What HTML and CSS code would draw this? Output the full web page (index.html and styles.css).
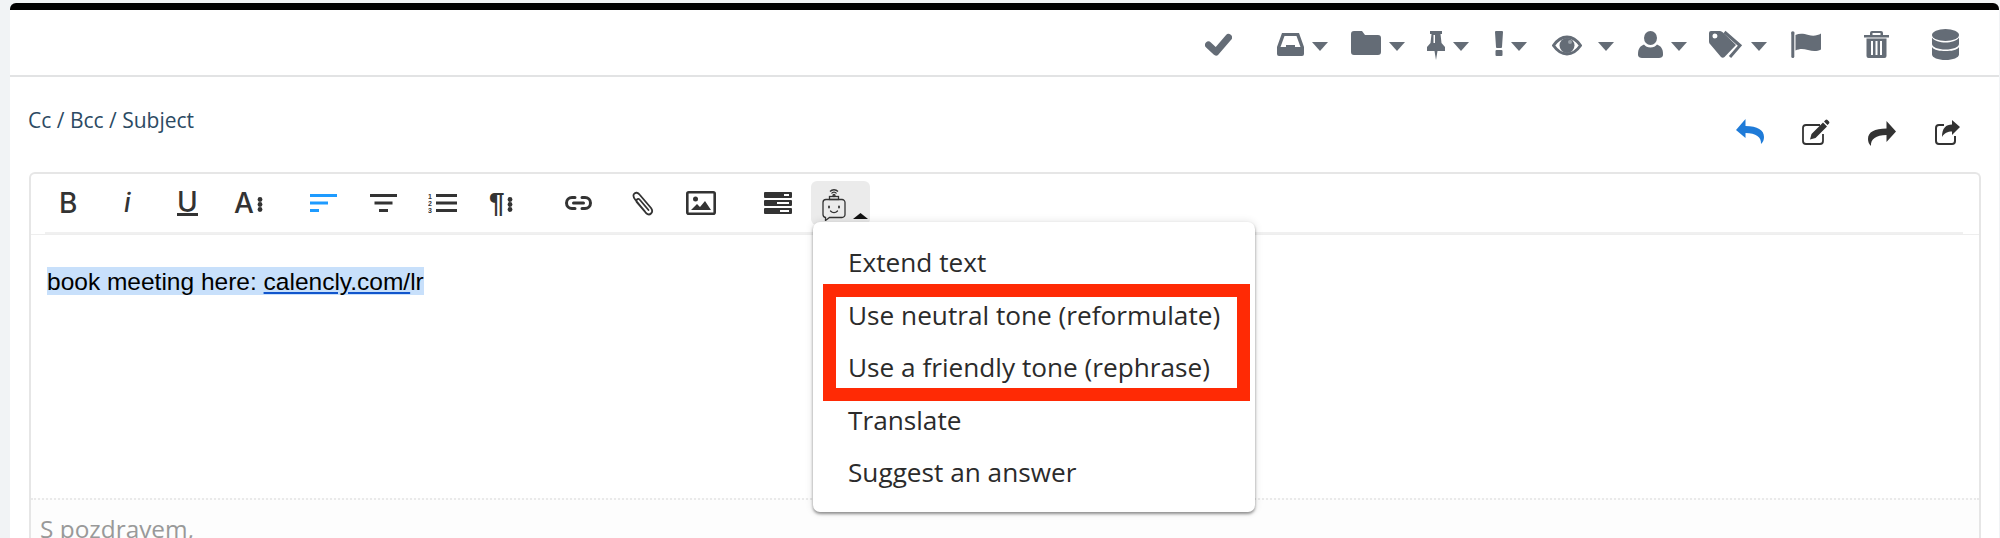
FILE: index.html
```html
<!DOCTYPE html>
<html lang="en">
<head>
    <meta charset="UTF-8">
    <meta name="viewport" content="width=device-width, initial-scale=1.0">
    <title>Compose reply</title>
    <link rel="stylesheet" href="styles.css">
</head>
<body>
    <svg class="sprites">
        <symbol id="caret" viewBox="0 0 16 32"><path d="M0 13h16l-8 9z"/></symbol>
        <symbol id="dots" viewBox="0 0 6 15"><circle cx="3" cy="2.500" r="2.400"/><circle cx="3" cy="7.500" r="2.400"/><circle cx="3" cy="12.500" r="2.400"/></symbol>
    </svg>

    <div class="card">
        <!-- Ticket actions -->
        <div class="actions">
            <div class="action">
                <svg class="icon" width="27" height="32" viewBox="0 0 27 32"><path d="M3.500 16l7.500 7L23.500 8.500" fill="none" stroke="currentColor" stroke-width="7" stroke-linecap="round" stroke-linejoin="round"/></svg>
            </div>
            <div class="action">
                <svg class="icon" width="27" height="32" viewBox="0 0 27 32"><path fill-rule="evenodd" d="M5 4h17l5 14v7a2 2 0 0 1-2 2H2a2 2 0 0 1-2-2v-7zM7.500 7L3.500 18H9v-2h9v2h5.500L19.500 7z"/></svg>
                <svg class="caret"><use href="#caret"/></svg>
            </div>
            <div class="action">
                <svg class="icon" width="30" height="32" viewBox="0 0 30 32"><path d="M3 2h8l3 4h13a3 3 0 0 1 3 3v14a3 3 0 0 1-3 3H3a3 3 0 0 1-3-3V5a3 3 0 0 1 3-3z"/></svg>
                <svg class="caret"><use href="#caret"/></svg>
            </div>
            <div class="action">
                <svg class="icon" width="18" height="32" viewBox="0 0 18 32"><path fill-rule="evenodd" d="M3 2h12v3h-1.500l1 9 3.500 4v4h-7.500L9 31l-1.500-9H0v-4l3.500-4 1-9H3zM6.500 6v8h1.500V6z"/></svg>
                <svg class="caret"><use href="#caret"/></svg>
            </div>
            <div class="action">
                <svg class="icon" width="8" height="32" viewBox="0 0 8 32"><path d="M1 2h6a1 1 0 0 1 1 1l-1 15a1 1 0 0 1-1 1H2a1 1 0 0 1-1-1L0 3a1 1 0 0 1 1-1z"/><rect x="0.500" y="21" width="7" height="6" rx="1"/></svg>
                <svg class="caret"><use href="#caret"/></svg>
            </div>
            <div class="action action-wide">
                <svg class="icon" width="30" height="32" viewBox="0 0 30 32"><path d="M1.500 16.500C6 10 10 8 15 8s9 2 13.500 8.500C24 23 20 25 15 25S6 23 1.500 16.500z" fill="none" stroke="currentColor" stroke-width="3"/><circle cx="15" cy="16.500" r="7.500"/><circle cx="18" cy="13" r="2" fill="#9aa1a8"/></svg>
                <svg class="caret"><use href="#caret"/></svg>
            </div>
            <div class="action">
                <svg class="icon" width="25" height="32" viewBox="0 0 25 32"><ellipse cx="12.500" cy="9" rx="6.500" ry="7"/><path d="M0 25c0-5 2-8 6-9.500 1.500 2 3.500 3 6.500 3s5-1 6.500-3c4 1.500 6 4.500 6 9.500v1c0 2-2 3-4 3H4c-2 0-4-1-4-3z"/></svg>
                <svg class="caret"><use href="#caret"/></svg>
            </div>
            <div class="action">
                <svg class="icon" width="34" height="32" viewBox="0 0 34 32"><path fill-rule="evenodd" d="M2 2h9c1 0 2 .5 3 1.500L27 16 15.500 28c-1 1-2.500 1-3.500 0L1 15c-.7-.8-1-1.500-1-3V4a2 2 0 0 1 2-2zM6 4.500a2.500 2.500 0 1 0 0 5 2.500 2.500 0 0 0 0-5z"/><path d="M15.500 3l15.500 13.500L21 28" fill="none" stroke="currentColor" stroke-width="3"/></svg>
                <svg class="caret"><use href="#caret"/></svg>
            </div>
            <div class="action">
                <svg class="icon" width="30" height="32" viewBox="0 0 30 32"><circle cx="1.800" cy="4" r="1.800"/><rect x="0.300" y="4" width="3" height="25" rx="1.500"/><path d="M4.500 6c4-2 8-1.500 13 0s9 .5 12.500-1.500v16c-4 2-8 2-13 .5s-8.500-1.500-12.500.5z"/></svg>
            </div>
            <div class="action">
                <svg class="icon" width="25" height="32" viewBox="0 0 25 32"><path fill-rule="evenodd" d="M6 6V4a2 2 0 0 1 2-2h9a2 2 0 0 1 2 2v2h6v2.500H0V6zM8.500 4v2h8V4z"/><path fill-rule="evenodd" d="M2.500 9.500h20V27a2 2 0 0 1-2 2h-16a2 2 0 0 1-2-2zM7 12v14h2V12zM11.500 12v14h2V12zM16 12v14h2V12z"/></svg>
            </div>
            <div class="action">
                <svg class="icon" width="27" height="32" viewBox="0 0 27 32"><ellipse cx="13.500" cy="6" rx="13.500" ry="6"/><path d="M0 8.500c2 3.500 8 5 13.500 5S25 12 27 8.500V15c0 3-6 5.500-13.500 5.500S0 18 0 15z"/><path d="M0 18c2 3.500 8 4 13.500 4S25 21.500 27 18v7.500c0 3-6 5.500-13.500 5.500S0 28.500 0 25.500z"/></svg>
            </div>
        </div>

        <div class="reply-head">
            <a class="fields-link">Cc / Bcc / Subject</a>
            <div class="reply-modes">
                <svg class="mode-active" width="28" height="28" viewBox="0 0 28 28"><path d="M0 11L9.500 0v7c12 0 18.500 4 18.500 11 0 3-1 5-3 7 .5-7-5-11-15.500-11v5z"/></svg>
                <svg width="28" height="28" viewBox="0 0 28 28"><path d="M18 6H4a3 3 0 0 0-3 3v13a3 3 0 0 0 3 3h14a3 3 0 0 0 3-3v-7" fill="none" stroke="currentColor" stroke-width="1.800"/><path d="M8 20.500l1.500-5.500L21 3.500l4 4L13.500 19zM22 2.500l1.500-1.500a1.500 1.500 0 0 1 2 0l1.500 1.500a1.500 1.500 0 0 1 0 2L25.500 6z"/></svg>
                <svg width="28" height="28" viewBox="0 0 28 28"><path d="M28 12.500L18.500 2v7.500C6.500 9.500 0 13 0 20c0 3 1 5 3 7-.5-7 5-11 15.500-11v7z"/></svg>
                <svg width="28" height="28" viewBox="0 0 28 28"><path d="M10 6H5a3 3 0 0 0-3 3v13a3 3 0 0 0 3 3h13a3 3 0 0 0 3-3v-5" fill="none" stroke="currentColor" stroke-width="2"/><path d="M26 8l-8-7v4.500C12 5.500 8 9 8 18c2.500-4 5.500-5.500 10-5.500V16z"/></svg>
            </div>
        </div>

        <div class="editor">
            <div class="toolbar">
                <span class="tool-text tool-bold">B</span>
                <span class="tool-text tool-italic">i</span>
                <span class="tool-text tool-under">U</span>
                <span class="tool-text tool-more">A<svg class="dots"><use href="#dots"/></svg></span>
                <svg class="tool-blue" width="27" height="20" viewBox="0 0 27 20"><rect y="1" width="27" height="3"/><rect y="8.500" width="18" height="3"/><rect y="16" width="9" height="3"/></svg>
                <svg width="27" height="20" viewBox="0 0 27 20"><rect y="1" width="27" height="3"/><rect x="4.500" y="8.500" width="18" height="3"/><rect x="9" y="16" width="9" height="3"/></svg>
                <svg width="29" height="22" viewBox="0 0 29 22"><text class="list-num" x="0" y="7">1</text><text class="list-num" x="0" y="14">2</text><text class="list-num" x="0" y="21">3</text><rect x="8" y="2" width="21" height="3"/><rect x="8" y="9.500" width="21" height="3"/><rect x="8" y="17" width="21" height="3"/></svg>
                <span class="tool-text tool-more tool-para">¶<svg class="dots"><use href="#dots"/></svg></span>
                <svg width="29" height="16" viewBox="0 0 29 16"><path d="M11 2.500H8a5.500 5.500 0 0 0 0 11h3M18 2.500h3a5.500 5.500 0 0 1 0 11h-3M9.500 8h10" fill="none" stroke="currentColor" stroke-width="3" stroke-linecap="round"/></svg>
                <svg width="23" height="25" viewBox="0 0 23 25"><path d="M14 20.500L4.500 9C2.500 6.500 1.500 5 3 3s4-1.500 5.500.5L20 17c1.500 2 1.500 4 0 5.500s-3.500 1-5-.5L6 11.500c-1-1.200-.8-2.200 0-3s2-.8 3 .5l8.500 10" fill="none" stroke="currentColor" stroke-width="1.800" stroke-linecap="round"/></svg>
                <svg width="30" height="24" viewBox="0 0 30 24"><rect x="1.300" y="1.300" width="27.400" height="21.400" rx="1.500" fill="none" stroke="currentColor" stroke-width="2.600"/><circle cx="9.500" cy="8" r="2.500"/><path d="M5 19l6-6 3 3 5-6 6 9z"/></svg>
                <svg width="28" height="24" viewBox="0 0 28 24"><path fill-rule="evenodd" d="M1 1h26a1 1 0 0 1 1 1v4a1 1 0 0 1-1 1H1a1 1 0 0 1-1-1V2a1 1 0 0 1 1-1zM20 3v2h5V3zM1 9h26a1 1 0 0 1 1 1v4a1 1 0 0 1-1 1H1a1 1 0 0 1-1-1v-4a1 1 0 0 1 1-1zM13 11v2h12v-2zM1 17h26a1 1 0 0 1 1 1v4a1 1 0 0 1-1 1H1a1 1 0 0 1-1-1v-4a1 1 0 0 1 1-1zM16 19v2h9v-2z"/></svg>

                <div class="ai-button">
                    <svg width="28" height="34" viewBox="0 0 28 34" fill="none" stroke="currentColor" stroke-width="1.300"><path d="M10 4.500a5.500 5.500 0 0 1 8 0M11.500 6.500a3 3 0 0 1 5 0"/><circle cx="14" cy="8.500" r="1"/><rect x="9.500" y="9.500" width="9" height="3"/><path d="M6 12.500h16a3 3 0 0 1 3 3v12a3 3 0 0 1-3 3H9.500L5.500 33.500v-3A3 3 0 0 1 3 27.500v-12a3 3 0 0 1 3-3z"/><path d="M9 19.500v1M19 19.500v1" stroke-linecap="round" stroke-width="1.800"/><path d="M10.500 24c2 2 5 2 7 0" stroke-linecap="round"/></svg>
                    <svg class="ai-caret" width="15" height="6" viewBox="0 0 15 6"><path d="M0 6L7.500 0 15 6z"/></svg>

                    <div class="ai-menu">
                        <div class="ai-item">Extend text</div>
                        <div class="ai-item">Use neutral tone (reformulate)</div>
                        <div class="ai-item">Use a friendly tone (rephrase)</div>
                        <div class="ai-item">Translate</div>
                        <div class="ai-item">Suggest an answer</div>
                        <div class="callout"></div>
                    </div>
                </div>
            </div>

            <div class="editor-body">
                <span class="selected">book meeting here: <span class="link">calencly.com/</span>lr</span>
            </div>
            <div class="signature">S pozdravem,</div>
        </div>
    </div>
</body>
</html>
```

FILE: styles.css
```css
/* Base styles */
:root {
    --icon: #646c76;
    --dark: #333;
    --line: #e6e6e6;
    --blue: #1e9bff;
    --red: #ff2a05;
}

html {
    overflow: hidden;
}

body {
    font-family: "Open Sans", sans-serif;
    margin: 0;
    height: 535px;
    padding: 3px 1px 0 10px;
    background: #f1f3f5;
    overflow: hidden;
}

.sprites {
    display: none;
}

.card {
    height: 100%;
    box-sizing: border-box;
    background: white;
    border-top: 7px solid black;
    border-radius: 6px 6px 0 0;
}

/* Ticket actions */
.actions {
    display: grid;
    grid-template-columns: 72px 74px 76px 68px 57px 86px 71px 82px 73px 68px 67px;
    box-sizing: border-box;
    height: 67px;
    padding: 19px 0 0 1195px;
    border-bottom: 2px solid #e2e3e4;
    color: var(--icon);
}

.action {
    display: flex;
    gap: 8px;
    align-items: flex-start;
}

.action-wide {
    gap: 16px;
}

.action svg,
.toolbar svg,
.reply-modes svg {
    display: block;
    fill: currentColor;
}

.action .caret {
    width: 16px;
    height: 32px;
}

/* Reply header */
.reply-head {
    display: flex;
    justify-content: space-between;
    align-items: flex-start;
    box-sizing: border-box;
    height: 95px;
    padding: 31px 37px 0 18px;
}

.fields-link {
    font-size: 21px;
    line-height: 24px;
    color: #2c4a63;
}

.reply-modes {
    display: flex;
    gap: 38px;
    margin-top: 11px;
    color: var(--dark);
}

.reply-modes .mode-active {
    color: #1f7bd8;
}

/* Editor */
.editor {
    box-sizing: border-box;
    margin: 0 18px 0 19px;
    height: 366px;
    border: 2px solid var(--line);
    border-bottom: none;
    border-radius: 6px 6px 0 0;
}

.toolbar {
    display: grid;
    grid-template-columns: 65px 53px 57px 76px 60px 58px 61px 75px 67px 55px 78px 47px auto;
    justify-items: start;
    align-items: center;
    box-sizing: border-box;
    height: 60px;
    margin: 0 16px 0 14px;
    padding-left: 14px;
    border-bottom: 2px solid #f0f0f0;
    color: var(--dark);
}

.tool-text {
    font-family: Inter, "Liberation Sans", sans-serif;
    font-size: 28px;
    line-height: 28px;
    font-weight: 500;
}

.tool-italic {
    font-style: italic;
    font-size: 26px;
}

.tool-under {
    line-height: 22px;
    border-bottom: 3px solid var(--dark);
}

.tool-more {
    display: flex;
    align-items: flex-end;
    gap: 3px;
}

.tool-para {
    font-family: "Liberation Sans", sans-serif;
    font-weight: 700;
    font-size: 28px;
    letter-spacing: -1px;
}

.dots {
    width: 6px;
    height: 15px;
    margin-bottom: 5px;
}

.tool-blue {
    color: var(--blue);
}

.list-num {
    font-family: "Liberation Sans", sans-serif;
    font-size: 7px;
    font-weight: 700;
}

/* AI dropdown */
.ai-button {
    position: relative;
    display: flex;
    align-items: flex-end;
    gap: 5px;
    box-sizing: border-box;
    width: 59px;
    height: 44px;
    padding: 0 0 4px 9px;
    background: #ebebeb;
    border-radius: 6px;
}

.toolbar .ai-button svg {
    flex: none;
}

.ai-button svg:first-child {
    fill: none;
}

.ai-caret {
    margin-bottom: 2px;
    color: #111;
}

.ai-menu {
    position: absolute;
    top: 41px;
    left: 2px;
    z-index: 2;
    box-sizing: border-box;
    width: 442px;
    height: 290px;
    padding: 14px 0;
    background: white;
    border-radius: 7px;
    box-shadow: 0 2px 3px rgba(0, 0, 0, 0.4), 0 0 8px rgba(0, 0, 0, 0.12);
}

.ai-item {
    padding-left: 35px;
    font-size: 26.200px;
    line-height: 52.500px;
    white-space: nowrap;
    color: #2b2b2b;
}

.callout {
    position: absolute;
    top: 62px;
    left: 10px;
    box-sizing: border-box;
    width: 427px;
    height: 117px;
    border: 13px solid var(--red);
}

.editor-body {
    box-sizing: border-box;
    height: 264px;
    padding: 32px 0 0 16px;
    border-top: 1px solid #eeeeee;
    font-family: "Liberation Sans", sans-serif;
    font-size: 24.500px;
    line-height: 27px;
    color: black;
}

.selected {
    display: inline-block;
    padding-top: 1px;
    background: #c8e0fb;
}

.link {
    text-decoration: underline;
    text-decoration-color: #1155cc;
}

.signature {
    height: 40px;
    box-sizing: border-box;
    padding: 12px 9px 0;
    border-top: 2px dotted #eaeaea;
    background: #fdfdfd;
    font-size: 24.400px;
    line-height: 33px;
    color: #999;
}
```
